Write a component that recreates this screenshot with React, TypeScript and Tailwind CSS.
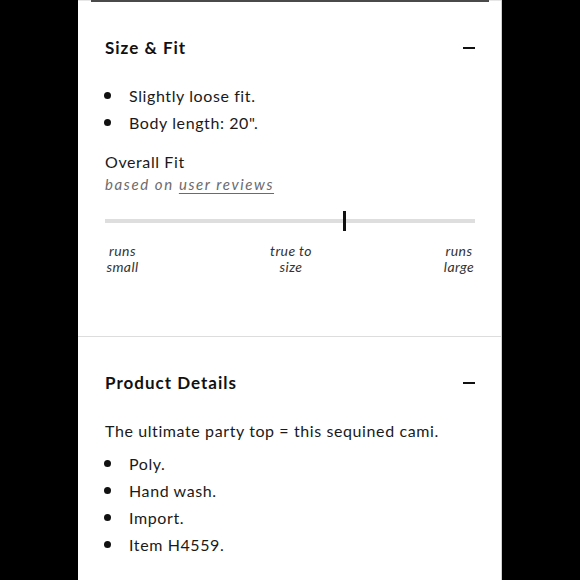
import React from "react";

const font = { fontFamily: "Lato, 'Noto Sans', sans-serif" };

const Minus = () => <div className="w-[12px] h-[2px] bg-[#111]" />;

const Bullet = ({ children }: { children: React.ReactNode }) => (
  <li className="flex items-center leading-[27px]">
    <span className="w-[7px] h-[7px] rounded-full bg-[#111] shrink-0 -ml-[1px]" />
    <span className="ml-[18px]">{children}</span>
  </li>
);

const SectionHeader = ({ title }: { title: string }) => (
  <div className="flex items-center justify-between h-[28px]">
    <h2 className="text-[17px] font-bold text-[#111] tracking-[1px]">{title}</h2>
    <Minus />
  </div>
);

export default function App() {
  return (
    <div className="w-[580px] h-[580px] bg-black flex justify-center overflow-hidden" style={font}>
      <div className="w-[424px] h-full bg-white border-r border-[#cfcfcf] flex flex-col">
        {/* bottom edge of the box above */}
        <div className="h-[1px] bg-[#e6e6e6] flex">
          <div className="ml-[13px] mr-[12px] flex-1 h-[2px] bg-[#4a4a4a]" />
        </div>

        {/* Size & Fit */}
        <section className="pl-[27px] pr-[26px] pt-[33px] text-[#1a1a1a] tracking-[0.6px]">
          <SectionHeader title="Size & Fit" />
          <ul className="mt-[20px] text-[16px]">
            <Bullet>Slightly loose fit.</Bullet>
            <Bullet>Body length: 20".</Bullet>
          </ul>

          <div className="mt-[14px] text-[16px] leading-[24px]">Overall Fit</div>
          <div className="text-[15px] leading-[20px] italic text-[#6b6b6b] tracking-[1.6px]">
            based on <span className="underline underline-offset-[3px]">user reviews</span>
          </div>

          <div className="relative mt-[25px] h-[4px] bg-[#dedede]">
            <div className="absolute left-[64.2%] top-[-8px] w-[3px] h-[20px] bg-[#111]" />
          </div>

          <div className="mt-[20px] flex justify-between text-[14px] leading-[16px] italic text-[#333] tracking-[0.4px]">
            <div className="text-center w-[35px]">
              runs
              <br />
              small
            </div>
            <div className="text-center">
              true to
              <br />
              size
            </div>
            <div className="text-center w-[34px] -mr-[1px]">
              runs
              <br />
              large
            </div>
          </div>
        </section>

        <div className="mt-[61px] h-[1px] bg-[#dddddd]" />

        {/* Product Details */}
        <section className="pl-[27px] pr-[26px] pt-[32px] text-[#1a1a1a] tracking-[0.6px]">
          <SectionHeader title="Product Details" />
          <p className="mt-[20px] text-[16px] leading-[27px]">
            The ultimate party top = this sequined cami.
          </p>
          <ul className="mt-[6px] text-[16px]">
            <Bullet>Poly.</Bullet>
            <Bullet>Hand wash.</Bullet>
            <Bullet>Import.</Bullet>
            <Bullet>Item H4559.</Bullet>
          </ul>
        </section>
      </div>
    </div>
  );
}
